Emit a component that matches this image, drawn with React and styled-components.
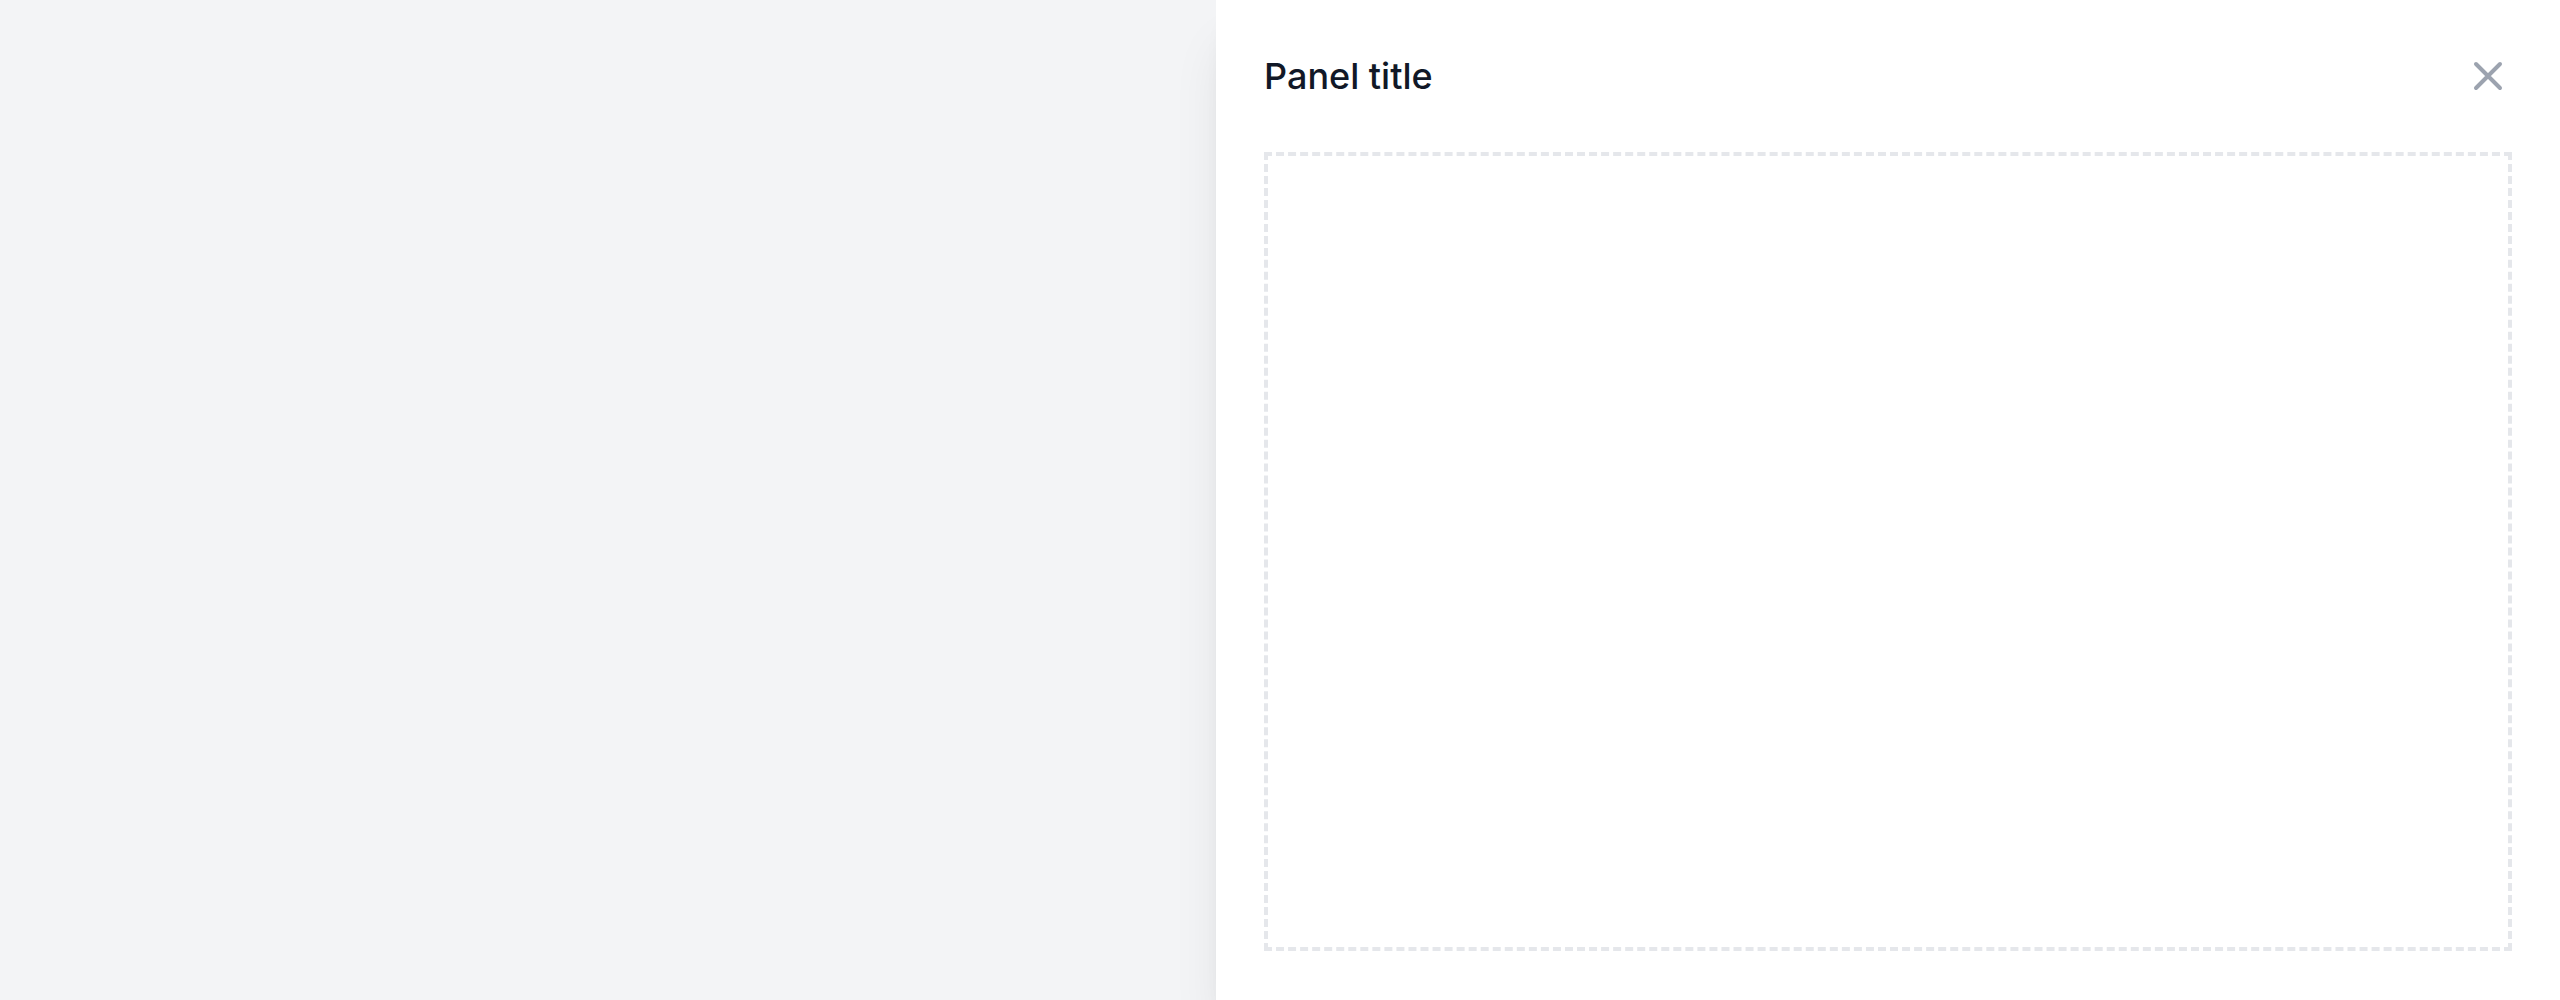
import styled, { createGlobalStyle } from 'styled-components';

const GlobalStyle = createGlobalStyle`
	html, body {
		margin: 0;
		padding: 0;
		height: 100%;
	}
	body {
		font-family: Inter, 'Noto Sans', sans-serif;
		background: #f3f4f6;
		-webkit-font-smoothing: antialiased;
	}
	#root {
		height: 100%;
	}
`;

function CloseIcon() {
	return (
		<svg width="48" height="48" viewBox="0 0 24 24" fill="none" stroke="currentColor" strokeWidth="2" aria-hidden="true">
			<path strokeLinecap="round" strokeLinejoin="round" d="M6 18 18 6M6 6l12 12" />
		</svg>
	);
}

export default function App() {
	return (
		<>
			<GlobalStyle />
			<Screen>
				<Backdrop />
				<Panel>
					<Header>
						<Title>Panel title</Title>
						<CloseButton type="button" aria-label="Close panel">
							<CloseIcon />
						</CloseButton>
					</Header>
					<Body>
						<Placeholder />
					</Body>
				</Panel>
			</Screen>
		</>
	);
}

const Screen = styled.div`
	display: flex;
	height: 100vh;
	overflow: hidden;
`;

const Backdrop = styled.div`
	flex: 1;
	background: #f3f4f6;
`;

const Panel = styled.div`
	width: 1344px;
	display: flex;
	flex-direction: column;
	background: #ffffff;
	padding: 48px 48px 49px;
	box-sizing: border-box;
	box-shadow: 0 40px 50px -10px rgba(0, 0, 0, 0.1), 0 16px 20px -12px rgba(0, 0, 0, 0.1);
	position: relative;
`;

const Header = styled.div`
	display: flex;
	align-items: center;
	justify-content: space-between;
	height: 56px;
`;

const Title = styled.h2`
	margin: 0;
	font-size: 36px;
	line-height: 56px;
	font-weight: 500;
	color: #111827;
`;

const CloseButton = styled.button`
	display: flex;
	align-items: center;
	justify-content: center;
	padding: 0;
	border: none;
	background: transparent;
	color: #9ca3af;
	cursor: pointer;
`;

const Body = styled.div`
	flex: 1;
	display: flex;
	margin-top: 48px;
`;

const Placeholder = styled.div`
	flex: 1;
	border: 4px dashed #e5e7eb;
`;
